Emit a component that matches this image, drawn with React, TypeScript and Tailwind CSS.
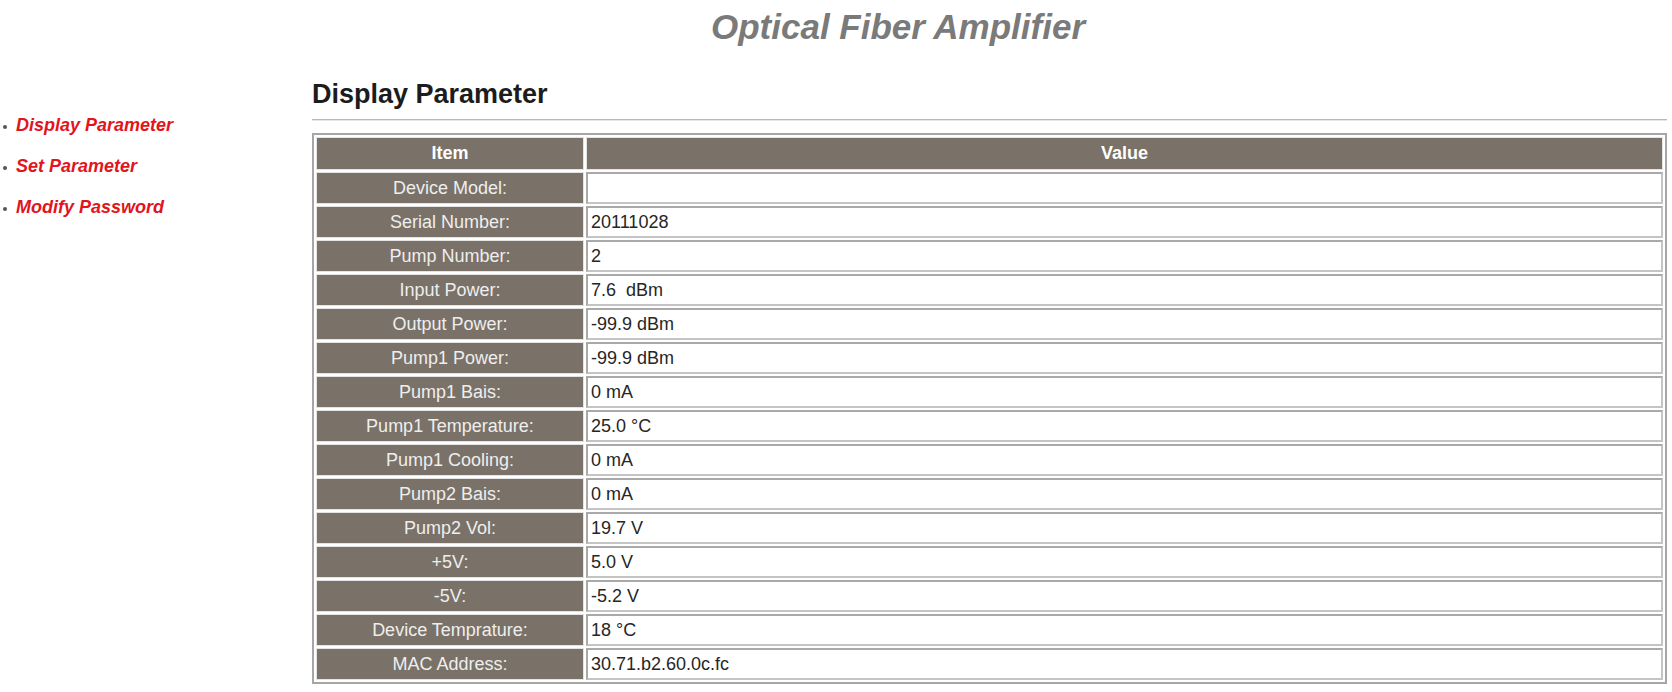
import React from 'react';

const ROWS: [string, string][] = [
  ['Device Model:', ''],
  ['Serial Number:', '20111028'],
  ['Pump Number:', '2'],
  ['Input Power:', '7.6\u00a0 dBm'],
  ['Output Power:', '-99.9 dBm'],
  ['Pump1 Power:', '-99.9 dBm'],
  ['Pump1 Bais:', '0 mA'],
  ['Pump1 Temperature:', '25.0 °C'],
  ['Pump1 Cooling:', '0 mA'],
  ['Pump2 Bais:', '0 mA'],
  ['Pump2 Vol:', '19.7 V'],
  ['+5V:', '5.0 V'],
  ['-5V:', '-5.2 V'],
  ['Device Temprature:', '18 °C'],
  ['MAC Address:', '30.71.b2.60.0c.fc'],
];

const NAV = ['Display Parameter', 'Set Parameter', 'Modify Password'];

const App: React.FC = () => {
  return (
    <div className="w-full h-[692px] bg-white overflow-hidden font-['Liberation_Sans',Arial,sans-serif]">
      {/* page title */}
      <div className="h-[48px] pt-[9px] flex justify-center pl-[124px]">
        <h1 className="text-[35px] leading-none font-bold italic text-[#7a7a7a]">
          Optical Fiber Amplifier
        </h1>
      </div>

      <div className="flex">
        {/* side menu */}
        <ul className="w-[312px] shrink-0 pt-[68px] flex flex-col gap-[23px]">
          {NAV.map((item) => (
            <li key={item} className="flex items-center h-[18px]">
              <span className="ml-[3px] w-[4px] h-[4px] rounded-full bg-[#555] mt-[3px]" />
              <a className="ml-[9px] text-[18px] leading-none font-bold italic text-[#e2141c] cursor-pointer">
                {item}
              </a>
            </li>
          ))}
        </ul>

        {/* content */}
        <div className="w-[1355px] shrink-0">
          <h2 className="mt-[33px] text-[27px] leading-none font-bold text-[#1c1c1c]">Display Parameter</h2>
          <div className="mt-[11px] h-[2px] bg-[#b8b8b8] border-b border-[#e6e6e6]" />

          <table className="mt-[12px] w-full border-separate border-spacing-[2px] border-2 border-[#a6a6a6] text-[18px]">
            <thead>
              <tr>
                <th className="w-[268px] h-[33px] bg-[#7a7268] border border-[#e4e4e4] text-white font-bold">Item</th>
                <th className="h-[33px] bg-[#7a7268] border border-[#e4e4e4] text-white font-bold">Value</th>
              </tr>
            </thead>
            <tbody>
              {ROWS.map(([label, value]) => (
                <tr key={label}>
                  <td className="h-[32px] bg-[#7a7268] border border-[#e4e4e4] text-center text-[#eeeeee]">{label}</td>
                  <td className="h-[32px] bg-white border-2 border-[#a9a9a9] border-b-[#c4c4c4] border-r-[#c4c4c4] px-[3px] text-[#262626]">
                    {value}
                  </td>
                </tr>
              ))}
            </tbody>
          </table>
        </div>
      </div>
    </div>
  );
};

export default App;
